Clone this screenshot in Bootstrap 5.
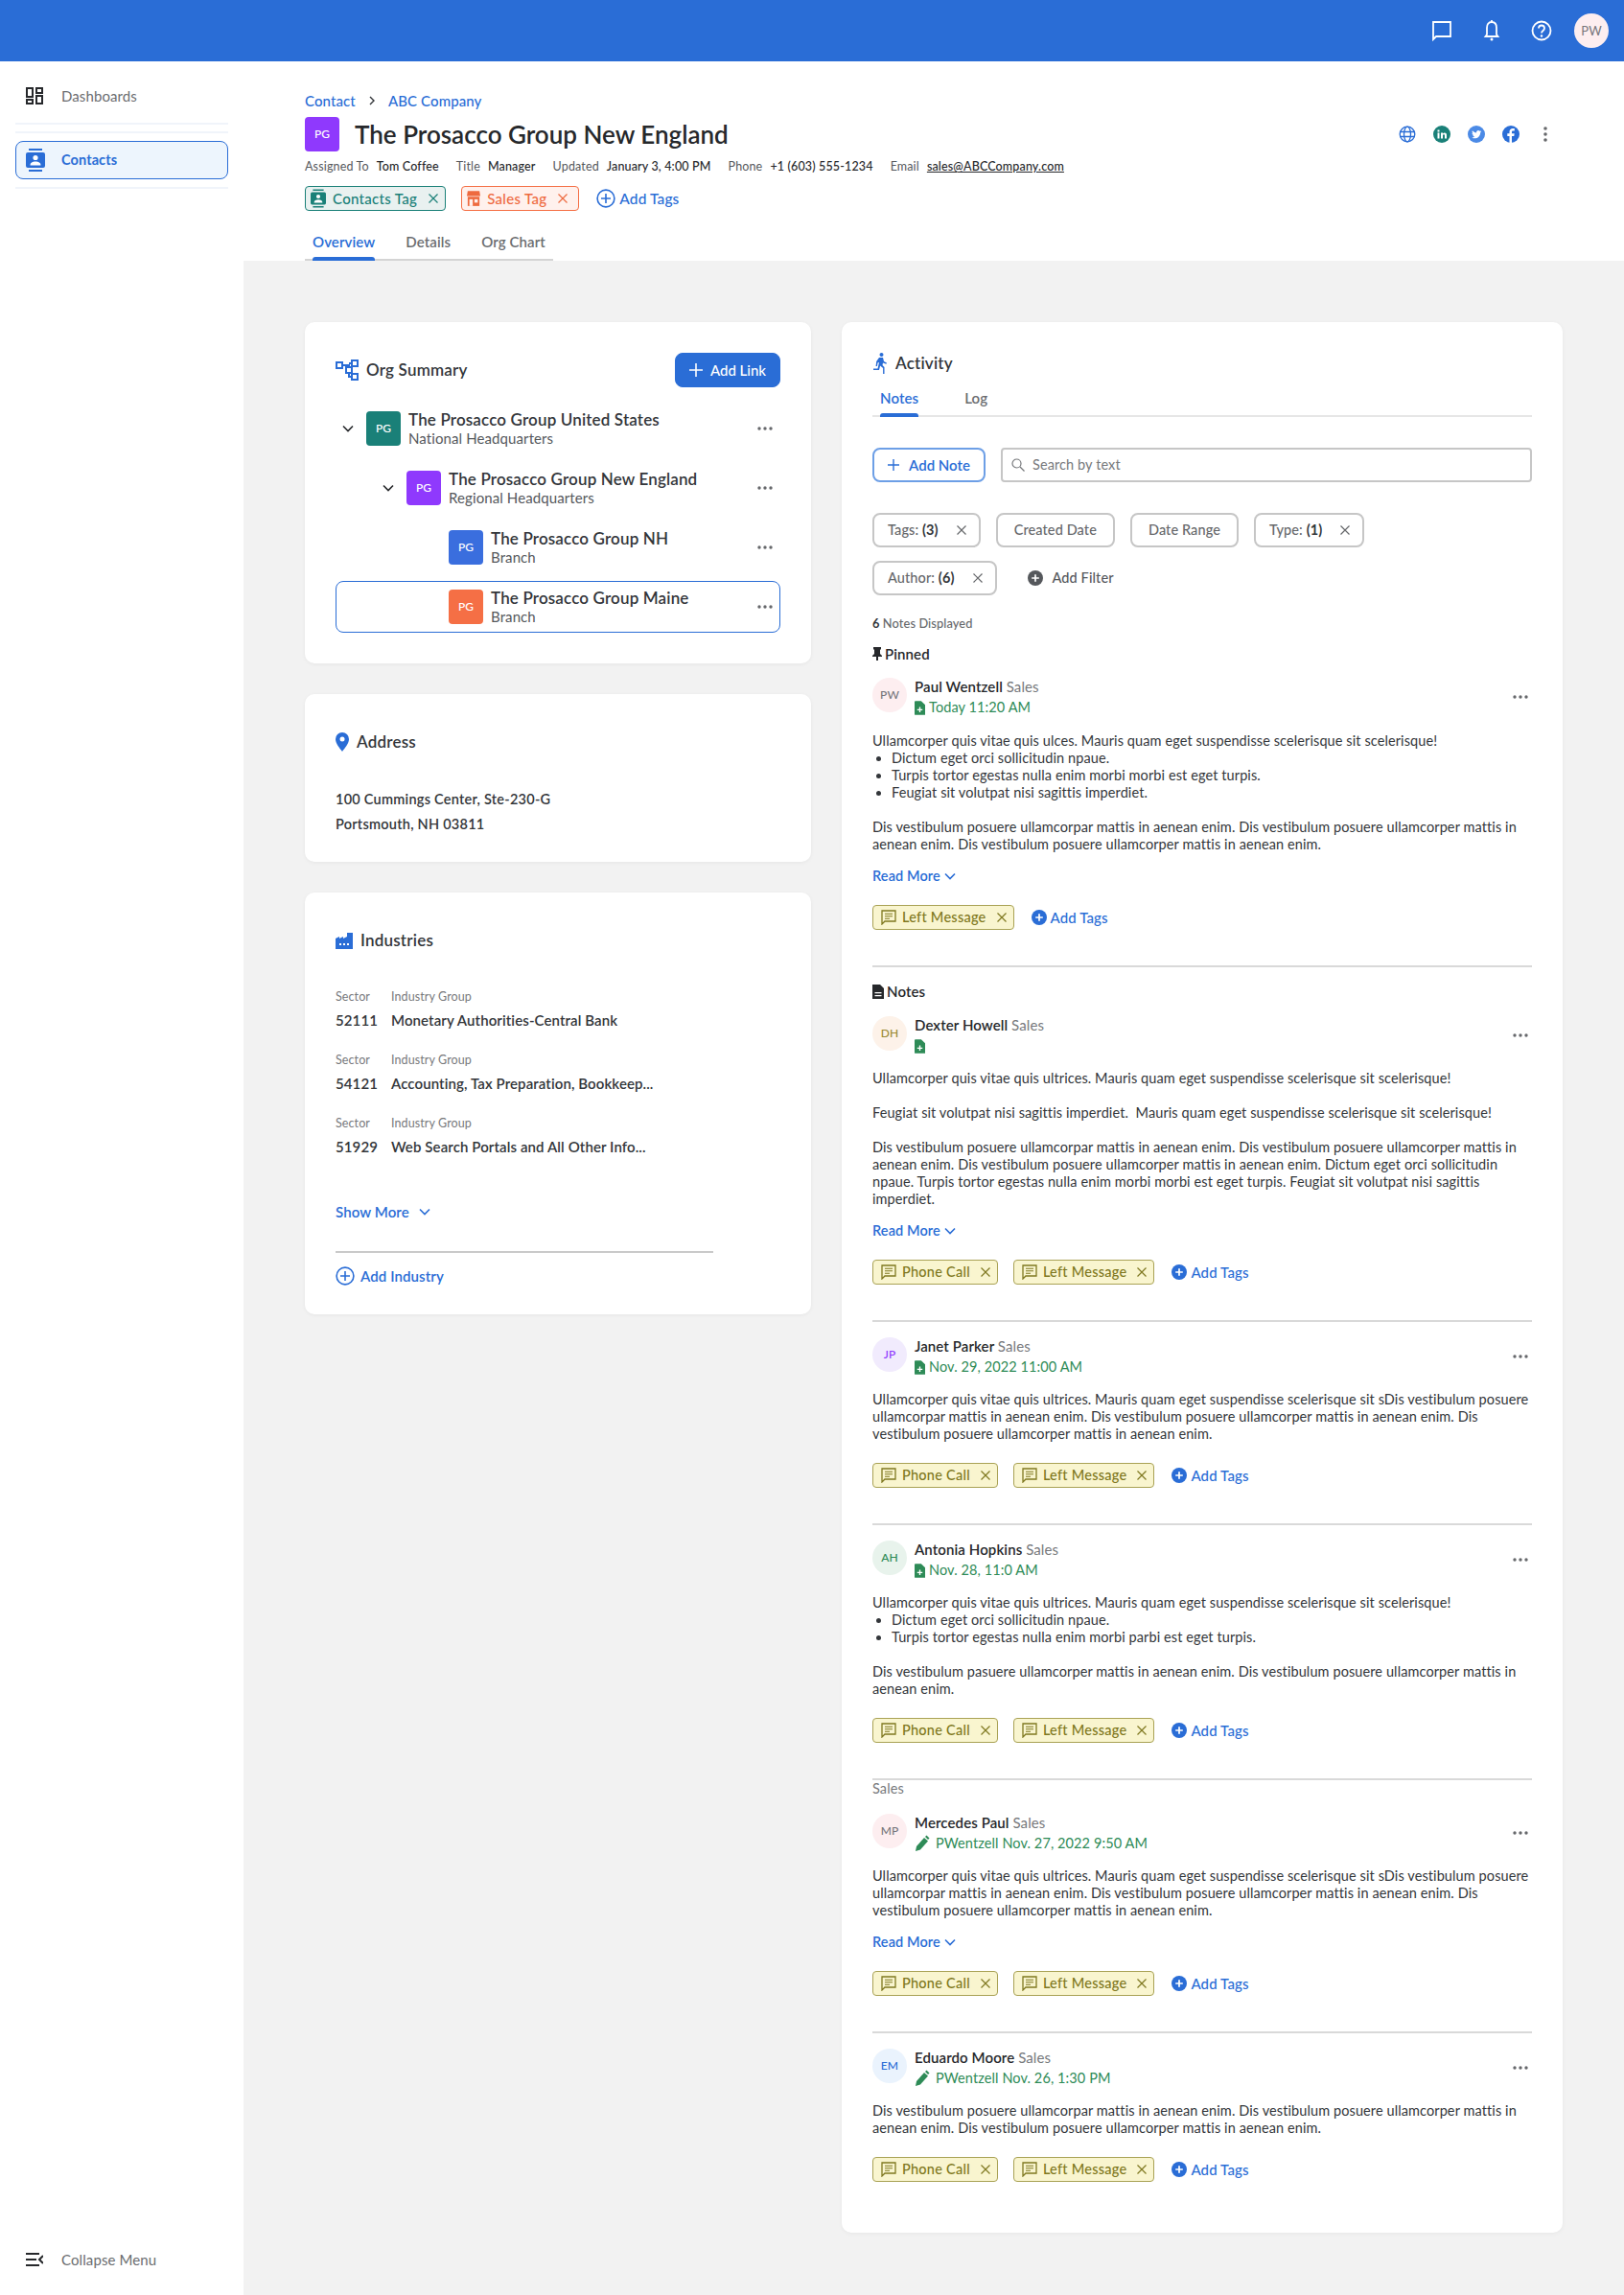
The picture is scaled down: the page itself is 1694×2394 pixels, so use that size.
<!DOCTYPE html>
<html lang="en">
<head>
  <meta charset="UTF-8" />
  <title>Contacts - The Prosacco Group New England</title>
  <link href="https://cdn.jsdelivr.net/npm/bootstrap@5.3.0/dist/css/bootstrap.min.css" rel="stylesheet" />
  <style>
    body {
      font-family: "Lato", "Noto Sans", sans-serif;
      font-size: 14.5px;
      letter-spacing: .1px;
      line-height: 18px;
      color: #33363a;
      background: #fff;
    }
    a { text-decoration: none; color: #2a6dd6; }
    svg { display: block; flex: none; }

    .top-strip { height: 64px; background: #2a6dd6; padding: 0 16px 0 0; gap: 30px; }
    .top-icon { width: 22px; height: 24px; color: #fff; }
    .top-avatar { width: 36px; height: 36px; margin-left: -7px; background: #fdeef0; color: #77777c; font-size: 13px; }

    .app-shell { min-height: 2330px; }
    .side-rail { width: 254px; flex: none; padding: 24px 16px 25px; }
    .rail-link { height: 24px; padding-left: 11px; gap: 19px; color: #6b6d70; font-size: 15px; }
    .rail-rule { height: 2px; background: #f0f4fa; }
    .rail-active { height: 40px; border: 1px solid #2a6dd6; border-radius: 8px; background: #edf5fd; color: #2a6dd6; padding-left: 10px; gap: 17px; font-weight: 700; margin: 8px 0; }

    .page-head { height: 208px; padding: 32px 64px 0; }
    .crumb-row { gap: 14px; font-weight: 500; font-size: 15px; }
    .head-title { margin-top: 8px; gap: 16px; }
    .org-badge { width: 36px; height: 36px; border-radius: 4px; color: #fff; font-size: 12px; font-weight: 500; flex: none; }
    .badge-teal { background: #1a8078; }
    .badge-purple { background: #8f39fd; }
    .badge-blue { background: #3a6ede; }
    .badge-orange { background: #f56f45; }
    .page-title { font-size: 26px; line-height: 36px; font-weight: 600; color: #26282b; margin: 0; letter-spacing: 0; }
    .social-row { gap: 18px; padding-right: 9px; }
    .meta-row { margin-top: 7px; font-size: 12.5px; letter-spacing: .15px; gap: 18px; color: #26282b; font-weight: 500; }
    .meta-row span { color: #55585c; font-weight: 400; margin-right: 8px; }
    .meta-row a { color: #26282b; text-decoration: underline; }
    .head-tags { margin-top: 11px; gap: 16px; height: 26px; }
    .head-tags .tag-chip { font-size: 15px; letter-spacing: .3px; gap: 7px; }
    .head-tags .chip-orange { padding-right: 10px; }
    .head-tags .add-tags { font-size: 15.5px; margin-left: 2px; }

    .tag-chip { height: 26px; border: 1px solid; border-radius: 4px; padding: 0 6px 0 5px; gap: 6px; white-space: nowrap; font-weight: 500; letter-spacing: .25px; }
    .chip-teal { border-color: #1a8078; color: #1a8078; background: #e9f1f0; }
    .chip-orange { border-color: #f56f45; color: #ee6a3f; background: #fff1ed; }
    .chip-note { border-color: #a9a255; color: #7f7820; background: #f9f5cf; padding-left: 8px; }
    .add-tags { gap: 4px; font-weight: 500; font-size: 15px; }
    .note-tags .add-tags { margin-left: 2px; }

    .tab-strip { display: inline-flex; border-bottom: 2px solid #d4d4d4; margin-top: 16px; gap: 32px; padding: 0 8px; height: 36px; }
    .tab-item { color: #6b6d70; font-weight: 600; line-height: 32px; position: relative; font-size: 15px; }
    .tab-on { color: #2a6dd6; }
    .tab-on::after { content: ""; position: absolute; left: 0; right: 0; bottom: -2px; height: 4px; background: #2a6dd6; border-radius: 3px 3px 0 0; }

    .page-canvas { background: #f2f2f2; padding: 64px 64px 65px; gap: 32px; }
    .col-left { width: 528px; flex: none; gap: 32px; }
    .col-right { flex: 1 1 0; min-width: 0; }
    .panel { border: 0; border-radius: 10px; box-shadow: 0 1px 4px rgba(0, 0, 0, .05); background: #fff; }
    .panel-title { font-size: 17px; line-height: 20px; font-weight: 600; color: #33363a; margin: 0; letter-spacing: .2px; }

    .org-panel { height: 356px; padding: 32px; }
    .add-link { width: 110px; height: 36px; background: #2a6dd6; border-color: #2a6dd6; border-radius: 8px; font-size: 15px; font-weight: 500; gap: 8px; padding: 0; }
    .org-head { height: 36px; gap: 8px; }
    .org-line { height: 54px; margin-top: 8px; padding-right: 7px; border: 1px solid transparent; border-radius: 8px; }
    .org-first { margin-top: 16px; }
    .org-line-on { border-color: #2a6dd6; }
    .org-caret { width: 24px; }
    .org-gap { margin-left: 7px; margin-right: 8px; }
    .org-name { font-size: 17px; line-height: 20px; font-weight: 600; color: #33363a; letter-spacing: .15px; }
    .org-sub { font-size: 15px; line-height: 18px; color: #55585c; }
    .indent-2 { padding-left: 42px; }
    .indent-3 { padding-left: 117px; }

    .addr-panel { height: 175px; padding: 40px 32px 0; }
    .addr-text { margin-top: 37px; font-size: 14.5px; line-height: 26px; font-weight: 600; letter-spacing: .25px; }

    .ind-panel { height: 440px; padding: 40px 32px 0; }
    .ind-list { margin-top: 41px; }
    .ind-row { margin-bottom: 24px; }
    .ind-label { font-size: 12.5px; line-height: 16px; color: #77797c; }
    .ind-value { font-size: 15px; line-height: 20px; font-weight: 600; margin-top: 6px; color: #33363a; }
    .ind-code { width: 58px; }
    .show-more { margin-top: 25px; gap: 10px; font-weight: 600; font-size: 15px; }
    .ind-rule { width: 394px; border-top: 2px solid #c9c9c9; margin-top: 32px; }
    .add-ind { margin-top: 14px; gap: 6px; font-weight: 600; font-size: 15px; }

    .act-panel { padding: 32px 32px 0; height: 1993px; }
    .act-tabs { border-bottom: 2px solid #e6e6e6; margin-top: 13px; height: 32px; padding: 0 8px; gap: 48px; }
    .act-tabs .tab-item { line-height: 24px; }
    .act-tools { margin-top: 32px; gap: 16px; }
    .add-note { width: 118px; height: 36px; border: 2px solid #6d9fe6; border-radius: 8px; color: #2a6dd6; font-weight: 600; background: #fff; gap: 10px; padding: 0; font-size: 15px; }
    .search-box { height: 36px; border: 2px solid #c6c6c6; border-radius: 4px; padding-left: 9px; gap: 8px; color: #77797c; }
    .filter-line { gap: 16px; margin-top: 14px; }
    .filter-first { margin-top: 32px; }
    .filter-chip { height: 36px; border: 2px solid #c6c6c6; border-radius: 8px; padding: 0 17px; gap: 18px; color: #66686b; font-weight: 500; background: #fff; }
    .chip-closable { padding: 0 12px 0 14px; }
    .filter-chip b { color: #33363a; font-weight: 700; }
    .add-filter { gap: 10px; margin-left: 16px; color: #55585c; font-weight: 500; }
    .notes-count { margin-top: 20px; font-size: 12.8px; color: #66686b; font-weight: 500; }
    .notes-count b { color: #33363a; }
    .group-head { gap: 3px; font-weight: 600; color: #26282b; font-size: 15px; }

    .note-item { padding-top: 16px; }
    .note-ruled { border-top: 2px solid #d9d9d9; margin-top: 37px; }
    .group-sales { color: #77797c; }
    .note-avatar { width: 36px; height: 36px; font-size: 12px; font-weight: 500; flex: none; }
    .av-rose { background: #fdeef0; color: #77777c; }
    .av-cream { background: #fdf2e9; color: #9b8a35; }
    .av-violet { background: #f1ebfd; color: #8f39fd; }
    .av-green { background: #e8f3ec; color: #2e8b57; }
    .av-blue { background: #eaf3fd; color: #2a6dd6; }
    .note-head { gap: 8px; height: 40px; }
    .note-who { font-weight: 600; color: #26282b; font-size: 15px; }
    .note-who span { font-weight: 400; color: #77797c; }
    .note-when { margin-top: 4px; height: 18px; gap: 4px; color: #2e8b57; }
    .note-when-edit { gap: 6px; }
    .note-text { margin-top: 16px; }
    .note-text p { margin: 0; }
    .note-text ul { margin: 0; padding-left: 20px; }
    .note-gap { height: 18px; }
    .read-more { margin-top: 15px; gap: 4px; font-weight: 600; }
    .note-tags { margin-top: 21px; gap: 16px; }
    .dots-btn { align-self: center; margin-right: 4px; }
  </style>
</head>
<body>
  <svg width="0" height="0" class="position-absolute">
    <symbol id="i-x" viewBox="0 0 12 12"><path d="M1.5 1.5l9 9M10.5 1.5l-9 9" fill="none" stroke="currentColor" stroke-width="1.2"/></symbol>
    <symbol id="i-dots" viewBox="0 0 16 4"><circle cx="2" cy="2" r="1.7" fill="#66686b"/><circle cx="8" cy="2" r="1.7" fill="#66686b"/><circle cx="14" cy="2" r="1.7" fill="#66686b"/></symbol>
    <symbol id="i-caret" viewBox="0 0 12 8"><path d="M1 1.5l5 5 5-5" fill="none" stroke="currentColor" stroke-width="1.6"/></symbol>
    <symbol id="i-plus" viewBox="0 0 14 14"><path d="M7 0v14M0 7h14" fill="none" stroke="currentColor" stroke-width="1.6"/></symbol>
    <symbol id="i-plus-ring" viewBox="0 0 20 20"><circle cx="10" cy="10" r="8.9" fill="none" stroke="currentColor" stroke-width="1.6"/><path d="M10 5v10M5 10h10" stroke="currentColor" stroke-width="1.6"/></symbol>
    <symbol id="i-plus-fill" viewBox="0 0 16 16"><circle cx="8" cy="8" r="8" fill="currentColor"/><path d="M8 4.2v7.6M4.2 8h7.6" stroke="#fff" stroke-width="1.7"/></symbol>
    <symbol id="i-note" viewBox="0 0 16 16"><path d="M1 1h14v11H4l-3 3z" fill="none" stroke="currentColor" stroke-width="1.3"/><path d="M4 4.3h8M4 6.8h8M4 9.3h5" stroke="currentColor" stroke-width="1.1"/></symbol>
    <symbol id="i-file" viewBox="0 0 12 16"><path d="M1 0h6.5L12 4.5V16H1a1 1 0 0 1-1-1V1a1 1 0 0 1 1-1z" fill="currentColor"/><path d="M6 7v6M3 10h6" stroke="#fff" stroke-width="1.5"/></symbol>
    <symbol id="i-pencil" viewBox="0 0 16 18"><path d="M1 17l1-5L10 3l4 3.5-8 9z" fill="currentColor"/><path d="M11 2l1.5-1.5 3 3L14 5z" fill="currentColor"/></symbol>
    <symbol id="i-book" viewBox="0 0 20 24"><path d="M3 0h14v2H3zM3 22h14v2H3z" fill="currentColor"/><rect y="4" width="20" height="16" rx="2" fill="currentColor"/><circle cx="10" cy="9.5" r="2.6" fill="#fff"/><path d="M4.5 17.5c0-3 2.5-4 5.5-4s5.500 1 5.500 4z" fill="#fff"/></symbol>
    <symbol id="i-store" viewBox="0 0 16 20"><path d="M1 1h14l1 6H0z" fill="currentColor"/><rect x="1" y="8" width="14" height="11" fill="currentColor"/><rect x="3" y="11" width="4" height="8" fill="#fff1ed"/><rect x="9" y="11" width="4" height="4" fill="#fff1ed"/></symbol>
  </svg>

  <nav class="navbar top-strip justify-content-end flex-nowrap">
    <svg class="top-icon" viewBox="0 0 22 24"><path d="M2 3h18v15H5l-3 3z" fill="none" stroke="currentColor" stroke-width="1.8"/></svg>
    <svg class="top-icon" viewBox="0 0 22 24"><path d="M11 3c3.500 0 5 2.500 5 6v7l1.500 2h-13L6 16V9c0-3.500 1.500-6 5-6z" fill="none" stroke="currentColor" stroke-width="1.800"/><circle cx="11" cy="21" r="1.500" fill="currentColor"/><path d="M11 1v2" stroke="currentColor" stroke-width="1.800"/></svg>
    <svg class="top-icon" viewBox="0 0 22 24"><circle cx="11" cy="12" r="9.500" fill="none" stroke="currentColor" stroke-width="1.800"/><path d="M8 9.500c0-4 6-4 6 0 0 2.500-3 2.500-3 5" fill="none" stroke="currentColor" stroke-width="1.800"/><circle cx="11" cy="17.500" r="1.200" fill="currentColor"/></svg>
    <div class="top-avatar rounded-circle d-flex align-items-center justify-content-center">PW</div>
  </nav>

  <div class="app-shell d-flex">
    <aside class="side-rail d-flex flex-column">
      <a href="#" class="rail-link d-flex align-items-center">
        <svg width="18" height="18" viewBox="0 0 18 18" fill="none" stroke="#26282b" stroke-width="2"><rect x="1" y="1" width="6" height="9"/><rect x="11" y="1" width="6" height="5"/><rect x="1" y="13" width="6" height="4"/><rect x="11" y="9" width="6" height="8"/></svg>
        Dashboards
      </a>
      <div class="rail-rule mt-3"></div>
      <div class="rail-rule" style="margin-top:7px"></div>
      <a href="#" class="rail-active d-flex align-items-center">
        <svg width="20" height="24" style="color:#2a6dd6"><use href="#i-book"/></svg>
        Contacts
      </a>
      <div class="rail-rule"></div>
      <a href="#" class="rail-link d-flex align-items-center mt-auto">
        <svg width="18" height="14" viewBox="0 0 18 14" fill="none" stroke="#26282b" stroke-width="2"><path d="M0 1h14M0 7h11M0 13h14M18 3l-4 4 4 4"/></svg>
        Collapse Menu
      </a>
    </aside>

    <main class="flex-grow-1 d-flex flex-column" style="min-width:0">
      <header class="page-head">
        <div class="crumb-row d-flex align-items-center">
          <a href="#">Contact</a>
          <svg width="6" height="10" viewBox="0 0 6 10" fill="none" stroke="#33363a" stroke-width="1.400"><path d="M1 1l4 4-4 4"/></svg>
          <a href="#">ABC Company</a>
        </div>
        <div class="head-title d-flex align-items-center">
          <div class="org-badge badge-purple d-flex align-items-center justify-content-center">PG</div>
          <h1 class="page-title flex-grow-1">The Prosacco Group New England</h1>
          <div class="social-row d-flex align-items-center">
            <svg width="18" height="18" viewBox="0 0 18 18" fill="none" stroke="#2a6dd6" stroke-width="1.300"><circle cx="9" cy="9" r="7.800"/><ellipse cx="9" cy="9" rx="3.500" ry="7.800"/><path d="M1.500 6.500h15M1.500 11.500h15"/></svg>
            <svg width="18" height="18" viewBox="0 0 18 18"><circle cx="9" cy="9" r="9" fill="#1a8078"/><path d="M4.500 7.500h2v6h-2zM4.500 4.500h2v2h-2zM8 7.500h2v.9c1.200-1.600 4-1.200 4 1.400v3.700h-2v-3.200c0-1.500-2-1.500-2 0v3.200H8z" fill="#fff"/></svg>
            <svg width="18" height="18" viewBox="0 0 18 18"><circle cx="9" cy="9" r="9" fill="#4b8ae6"/><path d="M14 6c-.4.200-.8.300-1.200.4.400-.3.800-.7.900-1.200-.4.200-.9.400-1.300.5-1.300-1.400-3.700-.2-3.300 1.700-1.700-.1-3.200-.9-4.200-2.100-.6 1-.3 2.200.6 2.900-.3 0-.7-.1-1-.3 0 1 .7 1.900 1.700 2.100-.3.100-.6.100-.9 0 .3.900 1.100 1.500 2 1.500-.9.700-2 1-3.100.9 3.800 2.300 9-.1 9-5.200.4-.3.800-.7 1-1.200z" fill="#fff"/></svg>
            <svg width="18" height="18" viewBox="0 0 18 18"><circle cx="9" cy="9" r="9" fill="#2a6dd6"/><path d="M10 18v-7h2.300l.4-2.700H10V6.700c0-.8.300-1.300 1.400-1.300h1.400V3c-.4 0-1.100-.1-1.900-.1-2 0-3.400 1.200-3.400 3.500v1.900H5.300V11h2.200v7z" fill="#fff"/></svg>
            <svg width="18" height="18" viewBox="0 0 18 18" fill="#66686b"><circle cx="9" cy="3" r="1.800"/><circle cx="9" cy="9" r="1.800"/><circle cx="9" cy="15" r="1.800"/></svg>
          </div>
        </div>
        <div class="meta-row d-flex align-items-center">
          <div><span>Assigned To</span>Tom Coffee</div>
          <div><span>Title</span>Manager</div>
          <div><span>Updated</span>January 3, 4:00 PM</div>
          <div><span>Phone</span>+1 (603) 555-1234</div>
          <div><span>Email</span><a href="#">sales@ABCCompany.com</a></div>
        </div>
        <div class="head-tags d-flex align-items-center">
          <div class="tag-chip chip-teal d-flex align-items-center"><svg width="16" height="20"><use href="#i-book"/></svg><span>Contacts Tag</span><svg width="12" height="12" class="ms-1"><use href="#i-x"/></svg></div>
          <div class="tag-chip chip-orange d-flex align-items-center"><svg width="14" height="18"><use href="#i-store"/></svg><span>Sales Tag</span><svg width="12" height="12" class="ms-1"><use href="#i-x"/></svg></div>
          <a href="#" class="add-tags d-flex align-items-center"><svg width="20" height="20"><use href="#i-plus-ring"/></svg>Add Tags</a>
        </div>
        <div class="tab-strip">
          <a href="#" class="tab-item tab-on">Overview</a>
          <a href="#" class="tab-item">Details</a>
          <a href="#" class="tab-item">Org Chart</a>
        </div>
      </header>

      <div class="page-canvas flex-grow-1 d-flex align-items-start">
        <div class="col-left d-flex flex-column">
          <section class="card panel org-panel">
            <div class="org-head d-flex align-items-center">
              <svg width="24" height="22" viewBox="0 0 24 22" fill="none" stroke="#2a6dd6" stroke-width="2"><rect x="1" y="3" width="6" height="6"/><rect x="17" y="1" width="6" height="6"/><rect x="17" y="15" width="6" height="6"/><rect x="11" y="8" width="6" height="6"/><path d="M7 6h7v2M14 14v4h3M14 4h3"/></svg>
              <h2 class="panel-title flex-grow-1">Org Summary</h2>
              <button class="btn btn-primary add-link d-flex align-items-center justify-content-center"><svg width="14" height="14"><use href="#i-plus"/></svg>Add Link</button>
            </div>
            <div class="org-line org-first d-flex align-items-center">
              <svg class="org-caret" width="24" height="8" style="color:#26282b"><use href="#i-caret"/></svg>
              <div class="org-badge org-gap badge-teal d-flex align-items-center justify-content-center">PG</div>
              <div class="flex-grow-1"><div class="org-name">The Prosacco Group United States</div><div class="org-sub">National Headquarters</div></div>
              <svg width="16" height="4"><use href="#i-dots"/></svg>
            </div>
            <div class="org-line indent-2 d-flex align-items-center">
              <svg class="org-caret" width="24" height="8" style="color:#26282b"><use href="#i-caret"/></svg>
              <div class="org-badge org-gap badge-purple d-flex align-items-center justify-content-center">PG</div>
              <div class="flex-grow-1"><div class="org-name">The Prosacco Group New England</div><div class="org-sub">Regional Headquarters</div></div>
              <svg width="16" height="4"><use href="#i-dots"/></svg>
            </div>
            <div class="org-line indent-3 d-flex align-items-center">
              <div class="org-badge badge-blue d-flex align-items-center justify-content-center me-2">PG</div>
              <div class="flex-grow-1"><div class="org-name">The Prosacco Group NH</div><div class="org-sub">Branch</div></div>
              <svg width="16" height="4"><use href="#i-dots"/></svg>
            </div>
            <div class="org-line org-line-on indent-3 d-flex align-items-center">
              <div class="org-badge badge-orange d-flex align-items-center justify-content-center me-2">PG</div>
              <div class="flex-grow-1"><div class="org-name">The Prosacco Group Maine</div><div class="org-sub">Branch</div></div>
              <svg width="16" height="4"><use href="#i-dots"/></svg>
            </div>
          </section>

          <section class="card panel addr-panel">
            <div class="d-flex align-items-center gap-2">
              <svg width="14" height="20" viewBox="0 0 14 20"><path d="M7 0a7 7 0 0 1 7 7c0 4.500-4.500 9.500-7 13C4.500 16.500 0 11.500 0 7a7 7 0 0 1 7-7z" fill="#2a6dd6"/><circle cx="7" cy="7" r="2.500" fill="#fff"/></svg>
              <h2 class="panel-title">Address</h2>
            </div>
            <div class="addr-text">100 Cummings Center, Ste-230-G<br />Portsmouth, NH 03811</div>
          </section>

          <section class="card panel ind-panel">
            <div class="d-flex align-items-center gap-2">
              <svg width="18" height="18" viewBox="0 0 18 18"><path d="M0 7l4-2v2l4-2v2l4-2V1h3v0h3v17H0z" fill="#2a6dd6"/><path d="M4 12h2v2H4zM8 12h2v2H8zM12 12h2v2h-2z" fill="#fff"/></svg>
              <h2 class="panel-title">Industries</h2>
            </div>
            <div class="ind-list">
              <div class="ind-row d-flex"><div class="ind-code"><div class="ind-label">Sector</div><div class="ind-value">52111</div></div><div><div class="ind-label">Industry Group</div><div class="ind-value">Monetary Authorities-Central Bank</div></div></div>
              <div class="ind-row d-flex"><div class="ind-code"><div class="ind-label">Sector</div><div class="ind-value">54121</div></div><div><div class="ind-label">Industry Group</div><div class="ind-value">Accounting, Tax Preparation, Bookkeep...</div></div></div>
              <div class="ind-row d-flex"><div class="ind-code"><div class="ind-label">Sector</div><div class="ind-value">51929</div></div><div><div class="ind-label">Industry Group</div><div class="ind-value">Web Search Portals and All Other Info...</div></div></div>
            </div>
            <a href="#" class="show-more d-flex align-items-center">Show More <svg width="12" height="8"><use href="#i-caret"/></svg></a>
            <div class="ind-rule"></div>
            <a href="#" class="add-ind d-flex align-items-center"><svg width="20" height="20"><use href="#i-plus-ring"/></svg>Add Industry</a>
          </section>
        </div>

        <div class="col-right">
          <section class="card panel act-panel">
            <div class="d-flex align-items-center gap-2">
              <svg width="16" height="22" viewBox="0 0 16 22" fill="#2a6dd6"><circle cx="9.500" cy="2" r="2"/><path d="M7 5h4l1 4 3 1.500-.6 1.200L11 10.500 10.500 13l2 2v7h-1.400v-6l-3-2.500L7 18H1v-1.500h4.500L7 10 5.500 10.500 5 14H3.600L4.200 9z"/></svg>
              <h2 class="panel-title">Activity</h2>
            </div>
            <div class="act-tabs d-flex">
              <a href="#" class="tab-item tab-on">Notes</a>
              <a href="#" class="tab-item">Log</a>
            </div>
            <div class="act-tools d-flex">
              <button class="btn add-note d-flex align-items-center justify-content-center"><svg width="12" height="12" viewBox="0 0 14 14"><use href="#i-plus"/></svg>Add Note</button>
              <div class="search-box flex-grow-1 d-flex align-items-center">
                <svg width="14" height="14" viewBox="0 0 14 14" fill="none" stroke="#77797c" stroke-width="1.200"><circle cx="5.500" cy="5.500" r="4.500"/><path d="M9 9l4.500 4.500"/></svg>
                Search by text
              </div>
            </div>
            <div class="filter-line filter-first d-flex align-items-center">
              <div class="filter-chip chip-closable d-flex align-items-center"><div>Tags: <b>(3)</b></div><svg width="12" height="12"><use href="#i-x"/></svg></div>
              <div class="filter-chip d-flex align-items-center">Created Date</div>
              <div class="filter-chip d-flex align-items-center">Date Range</div>
              <div class="filter-chip chip-closable d-flex align-items-center"><div>Type: <b>(1)</b></div><svg width="12" height="12"><use href="#i-x"/></svg></div>
            </div>
            <div class="filter-line d-flex align-items-center">
              <div class="filter-chip chip-closable d-flex align-items-center"><div>Author: <b>(6)</b></div><svg width="12" height="12"><use href="#i-x"/></svg></div>
              <a href="#" class="add-filter d-flex align-items-center"><svg width="16" height="16" style="color:#55585c"><use href="#i-plus-fill"/></svg>Add Filter</a>
            </div>
            <div class="notes-count"><b>6</b> Notes Displayed</div>

            <div class="group-head d-flex align-items-center" style="margin-top:14px">
              <svg width="10" height="14" viewBox="0 0 10 14" fill="#26282b"><path d="M1 0h8v2L8 3v4l2 2v1H6v4H4v-4H0V9l2-2V3L1 2z"/></svg>
              Pinned
            </div>
            <article class="note-item">
              <div class="note-head d-flex">
                <div class="note-avatar av-rose rounded-circle d-flex align-items-center justify-content-center">PW</div>
                <div class="flex-grow-1">
                  <div class="note-who">Paul Wentzell <span>Sales</span></div>
                  <div class="note-when d-flex align-items-center"><svg width="11" height="15"><use href="#i-file"/></svg>Today 11:20 AM</div>
                </div>
                <svg class="dots-btn" width="16" height="4"><use href="#i-dots"/></svg>
              </div>
              <div class="note-text" style="margin-top:17px">
                <p>Ullamcorper quis vitae quis ulces. Mauris quam eget suspendisse scelerisque sit scelerisque!</p>
                <ul><li>Dictum eget orci sollicitudin npaue.</li><li>Turpis tortor egestas nulla enim morbi morbi est eget turpis.</li><li>Feugiat sit volutpat nisi sagittis imperdiet.</li></ul>
                <div class="note-gap"></div>
                <p>Dis vestibulum posuere ullamcorpar mattis in aenean enim. Dis vestibulum posuere ullamcorper mattis in aenean enim. Dis vestibulum posuere ullamcorper mattis in aenean enim.</p>
              </div>
              <a href="#" class="read-more d-flex align-items-center">Read More <svg width="12" height="8"><use href="#i-caret"/></svg></a>
              <div class="note-tags d-flex align-items-center">
                <div class="tag-chip chip-note d-flex align-items-center"><svg width="16" height="16"><use href="#i-note"/></svg><span>Left Message</span><svg width="12" height="12" class="ms-1"><use href="#i-x"/></svg></div>
                <a href="#" class="add-tags d-flex align-items-center"><svg width="16" height="16"><use href="#i-plus-fill"/></svg>Add Tags</a>
              </div>
            </article>

            <div class="note-ruled"></div>
            <div class="group-head d-flex align-items-center" style="margin-top:16px">
              <svg width="12" height="15" viewBox="0 0 12 15" fill="#26282b"><path d="M0 0h8l4 4v11H0zM2.500 8v1.200h7V8zM2.500 11v1.200h7V11z" fill-rule="evenodd"/></svg>
              Notes
            </div>
            <article class="note-item" style="padding-top:17px">
              <div class="note-head d-flex">
                <div class="note-avatar av-cream rounded-circle d-flex align-items-center justify-content-center">DH</div>
                <div class="flex-grow-1">
                  <div class="note-who">Dexter Howell <span>Sales</span></div>
                  <div class="note-when d-flex align-items-center"><svg width="11" height="15"><use href="#i-file"/></svg></div>
                </div>
                <svg class="dots-btn" width="16" height="4"><use href="#i-dots"/></svg>
              </div>
              <div class="note-text">
                <p>Ullamcorper quis vitae quis ultrices. Mauris quam eget suspendisse scelerisque sit scelerisque!</p>
                <div class="note-gap"></div>
                <p>Feugiat sit volutpat nisi sagittis imperdiet.&nbsp; Mauris quam eget suspendisse scelerisque sit scelerisque!</p>
                <div class="note-gap"></div>
                <p>Dis vestibulum posuere ullamcorpar mattis in aenean enim. Dis vestibulum posuere ullamcorper mattis in aenean enim. Dis vestibulum posuere ullamcorper mattis in aenean enim. Dictum eget orci sollicitudin npaue. Turpis tortor egestas nulla enim morbi morbi est eget turpis. Feugiat sit volutpat nisi sagittis imperdiet.</p>
              </div>
              <a href="#" class="read-more d-flex align-items-center">Read More <svg width="12" height="8"><use href="#i-caret"/></svg></a>
              <div class="note-tags d-flex align-items-center">
                <div class="tag-chip chip-note d-flex align-items-center"><svg width="16" height="16"><use href="#i-note"/></svg><span>Phone Call</span><svg width="12" height="12" class="ms-1"><use href="#i-x"/></svg></div>
                <div class="tag-chip chip-note d-flex align-items-center"><svg width="16" height="16"><use href="#i-note"/></svg><span>Left Message</span><svg width="12" height="12" class="ms-1"><use href="#i-x"/></svg></div>
                <a href="#" class="add-tags d-flex align-items-center"><svg width="16" height="16"><use href="#i-plus-fill"/></svg>Add Tags</a>
              </div>
            </article>

            <div class="note-ruled"></div>
            <article class="note-item">
              <div class="note-head d-flex">
                <div class="note-avatar av-violet rounded-circle d-flex align-items-center justify-content-center">JP</div>
                <div class="flex-grow-1">
                  <div class="note-who">Janet Parker <span>Sales</span></div>
                  <div class="note-when d-flex align-items-center"><svg width="11" height="15"><use href="#i-file"/></svg>Nov. 29, 2022 11:00 AM</div>
                </div>
                <svg class="dots-btn" width="16" height="4"><use href="#i-dots"/></svg>
              </div>
              <div class="note-text">
                <p>Ullamcorper quis vitae quis ultrices. Mauris quam eget suspendisse scelerisque sit sDis vestibulum posuere ullamcorpar mattis in aenean enim. Dis vestibulum posuere ullamcorper mattis in aenean enim. Dis vestibulum posuere ullamcorper mattis in aenean enim.</p>
              </div>
              <div class="note-tags d-flex align-items-center">
                <div class="tag-chip chip-note d-flex align-items-center"><svg width="16" height="16"><use href="#i-note"/></svg><span>Phone Call</span><svg width="12" height="12" class="ms-1"><use href="#i-x"/></svg></div>
                <div class="tag-chip chip-note d-flex align-items-center"><svg width="16" height="16"><use href="#i-note"/></svg><span>Left Message</span><svg width="12" height="12" class="ms-1"><use href="#i-x"/></svg></div>
                <a href="#" class="add-tags d-flex align-items-center"><svg width="16" height="16"><use href="#i-plus-fill"/></svg>Add Tags</a>
              </div>
            </article>

            <div class="note-ruled"></div>
            <article class="note-item">
              <div class="note-head d-flex">
                <div class="note-avatar av-green rounded-circle d-flex align-items-center justify-content-center">AH</div>
                <div class="flex-grow-1">
                  <div class="note-who">Antonia Hopkins <span>Sales</span></div>
                  <div class="note-when d-flex align-items-center"><svg width="11" height="15"><use href="#i-file"/></svg>Nov. 28, 11:0 AM</div>
                </div>
                <svg class="dots-btn" width="16" height="4"><use href="#i-dots"/></svg>
              </div>
              <div class="note-text">
                <p>Ullamcorper quis vitae quis ultrices. Mauris quam eget suspendisse scelerisque sit scelerisque!</p>
                <ul><li>Dictum eget orci sollicitudin npaue.</li><li>Turpis tortor egestas nulla enim morbi parbi est eget turpis.</li></ul>
                <div class="note-gap"></div>
                <p>Dis vestibulum pasuere ullamcorper mattis in aenean enim. Dis vestibulum posuere ullamcorper mattis in aenean enim.</p>
              </div>
              <div class="note-tags d-flex align-items-center">
                <div class="tag-chip chip-note d-flex align-items-center"><svg width="16" height="16"><use href="#i-note"/></svg><span>Phone Call</span><svg width="12" height="12" class="ms-1"><use href="#i-x"/></svg></div>
                <div class="tag-chip chip-note d-flex align-items-center"><svg width="16" height="16"><use href="#i-note"/></svg><span>Left Message</span><svg width="12" height="12" class="ms-1"><use href="#i-x"/></svg></div>
                <a href="#" class="add-tags d-flex align-items-center"><svg width="16" height="16"><use href="#i-plus-fill"/></svg>Add Tags</a>
              </div>
            </article>

            <div class="note-ruled"></div>
            <div class="group-sales">Sales</div>
            <article class="note-item" style="padding-top:17px">
              <div class="note-head d-flex">
                <div class="note-avatar av-rose rounded-circle d-flex align-items-center justify-content-center">MP</div>
                <div class="flex-grow-1">
                  <div class="note-who">Mercedes Paul <span>Sales</span></div>
                  <div class="note-when note-when-edit d-flex align-items-center"><svg width="16" height="18"><use href="#i-pencil"/></svg>PWentzell Nov. 27, 2022 9:50 AM</div>
                </div>
                <svg class="dots-btn" width="16" height="4"><use href="#i-dots"/></svg>
              </div>
              <div class="note-text">
                <p>Ullamcorper quis vitae quis ultrices. Mauris quam eget suspendisse scelerisque sit sDis vestibulum posuere ullamcorpar mattis in aenean enim. Dis vestibulum posuere ullamcorper mattis in aenean enim. Dis vestibulum posuere ullamcorper mattis in aenean enim.</p>
              </div>
              <a href="#" class="read-more d-flex align-items-center">Read More <svg width="12" height="8"><use href="#i-caret"/></svg></a>
              <div class="note-tags d-flex align-items-center">
                <div class="tag-chip chip-note d-flex align-items-center"><svg width="16" height="16"><use href="#i-note"/></svg><span>Phone Call</span><svg width="12" height="12" class="ms-1"><use href="#i-x"/></svg></div>
                <div class="tag-chip chip-note d-flex align-items-center"><svg width="16" height="16"><use href="#i-note"/></svg><span>Left Message</span><svg width="12" height="12" class="ms-1"><use href="#i-x"/></svg></div>
                <a href="#" class="add-tags d-flex align-items-center"><svg width="16" height="16"><use href="#i-plus-fill"/></svg>Add Tags</a>
              </div>
            </article>

            <div class="note-ruled"></div>
            <article class="note-item">
              <div class="note-head d-flex">
                <div class="note-avatar av-blue rounded-circle d-flex align-items-center justify-content-center">EM</div>
                <div class="flex-grow-1">
                  <div class="note-who">Eduardo Moore <span>Sales</span></div>
                  <div class="note-when note-when-edit d-flex align-items-center"><svg width="16" height="18"><use href="#i-pencil"/></svg>PWentzell Nov. 26, 1:30 PM</div>
                </div>
                <svg class="dots-btn" width="16" height="4"><use href="#i-dots"/></svg>
              </div>
              <div class="note-text">
                <p>Dis vestibulum posuere ullamcorpar mattis in aenean enim. Dis vestibulum posuere ullamcorper mattis in aenean enim. Dis vestibulum posuere ullamcorper mattis in aenean enim.</p>
              </div>
              <div class="note-tags d-flex align-items-center">
                <div class="tag-chip chip-note d-flex align-items-center"><svg width="16" height="16"><use href="#i-note"/></svg><span>Phone Call</span><svg width="12" height="12" class="ms-1"><use href="#i-x"/></svg></div>
                <div class="tag-chip chip-note d-flex align-items-center"><svg width="16" height="16"><use href="#i-note"/></svg><span>Left Message</span><svg width="12" height="12" class="ms-1"><use href="#i-x"/></svg></div>
                <a href="#" class="add-tags d-flex align-items-center"><svg width="16" height="16"><use href="#i-plus-fill"/></svg>Add Tags</a>
              </div>
            </article>
          </section>
        </div>
      </div>
    </main>
  </div>

  <script src="https://cdn.jsdelivr.net/npm/bootstrap@5.3.0/dist/js/bootstrap.bundle.min.js"></script>
</body>
</html>
